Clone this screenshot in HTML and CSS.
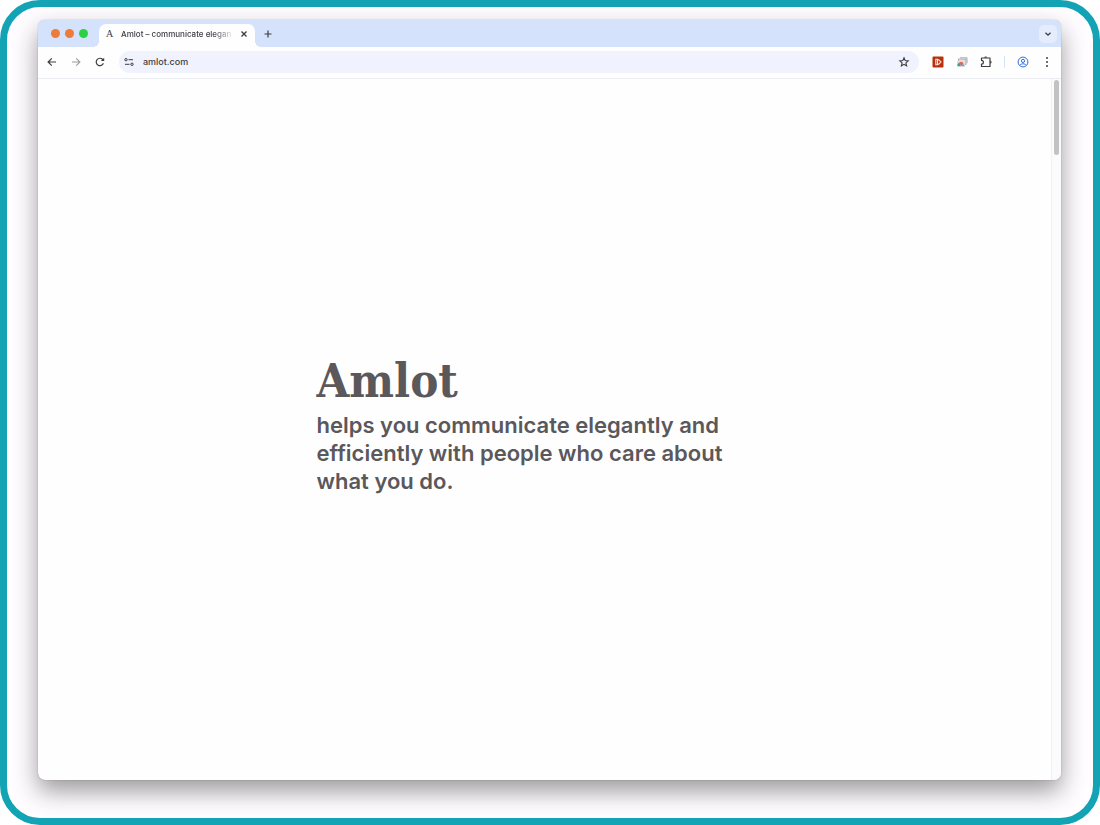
FILE: index.html
```html
<!DOCTYPE html>
<html lang="en">
<head>
<meta charset="UTF-8" />
<meta name="viewport" content="width=device-width, initial-scale=1" />
<title>Amlot – communicate elegantly</title>
<link rel="stylesheet" href="styles.css">
</head>
<body>

<div class="frame">
  <div class="browser">

    <div class="tab-strip">
      <div class="lights">
        <span class="light"></span>
        <span class="light"></span>
        <span class="light light-green"></span>
      </div>
      <div class="tab">
        <span class="favicon">A</span>
        <span class="tab-title">Amlot – communicate elegan</span>
        <button type="button" class="tab-close" aria-label="Close tab">
          <svg width="8" height="8" viewBox="0 0 8 8"><path d="M1.500 1.500l5 5M6.500 1.500l-5 5" stroke-width="1.300"/></svg>
        </button>
      </div>
      <button type="button" class="new-tab" aria-label="New tab">
        <svg width="10" height="10" viewBox="0 0 10 10"><path d="M5 1.500v7M1.500 5h7" stroke-width="1.200"/></svg>
      </button>
      <button type="button" class="tab-search" aria-label="Search tabs">
        <svg width="8" height="8" viewBox="0 0 8 8"><path d="M1.500 2.800L4 5.200l2.500-2.400" stroke-width="1.300"/></svg>
      </button>
    </div>

    <div class="toolbar">
      <button type="button" class="tool" aria-label="Back">
        <svg width="12" height="12" viewBox="0 0 12 12"><path d="M10 6H2.300M5.800 2.300L2.100 6l3.700 3.700" stroke-width="1.200"/></svg>
      </button>
      <button type="button" class="tool tool-off" aria-label="Forward" disabled>
        <svg width="12" height="12" viewBox="0 0 12 12"><path d="M2 6h7.700M6.200 2.300L9.900 6 6.200 9.700" stroke-width="1.100"/></svg>
      </button>
      <button type="button" class="tool" aria-label="Reload">
        <svg width="12" height="12" viewBox="0 0 12 12"><path d="M9.400 7.200A3.700 3.700 0 1 1 8.700 3.500L9.800 4.600" stroke-width="1.200"/><path d="M10.200 1.800v3.300H6.900z" fill="#3c3c43" stroke="none"/></svg>
      </button>

      <div class="omnibox">
        <button type="button" class="site-info" aria-label="Site information">
          <svg width="12" height="12" viewBox="0 0 12 12"><circle cx="3" cy="3.700" r="1.200"/><path d="M5.500 3.700H10M2 8.300h4.500"/><circle cx="9" cy="8.300" r="1.200"/></svg>
        </button>
        <input type="text" class="url" value="amlot.com" aria-label="Address" />
        <button type="button" class="bookmark" aria-label="Bookmark this page">
          <svg width="12" height="12" viewBox="0 0 12 12"><path d="M6 1.800l1.200 2.800 3 .300-2.300 2 .700 3L6 8.300l-2.600 1.600.700-3-2.300-2 3-.300z" stroke-width="1.100"/></svg>
        </button>
      </div>

      <button type="button" class="tool" aria-label="Page tools extension">
        <svg width="12" height="12" viewBox="0 0 12 12"><rect x="0.500" y="0.500" width="11" height="11" rx="1" fill="#b9300e" stroke="none"/><path d="M3.800 3.300v5.400h1.700V3.300zM5.500 3.800h1.300L9 6 6.800 8.200H5.500" stroke="#fbe6df" stroke-width="1.100"/></svg>
      </button>
      <button type="button" class="tool" aria-label="Image extension">
        <svg width="12" height="12" viewBox="0 0 12 12"><path d="M4 1.800h7v5.500" stroke="#aaa9ae"/><rect x="2.500" y="3" width="7.500" height="5.500" fill="#dedde2" stroke="#9b9a9f" stroke-width="0.700"/><rect x="1" y="4.700" width="8" height="5.800" rx="0.500" fill="#e0e0e4" stroke="none"/><path d="M1.500 10.200V8l2-1.500 1.500 3.700z" fill="#3fa37b" stroke="none"/><path d="M2.800 7.500a2.500 2.500 0 0 1 4.700 0l-2 2.200z" fill="#e46850" stroke="none"/><path d="M6.800 7.500l2 2.700H5z" fill="#6c9bdf" stroke="none"/></svg>
      </button>
      <button type="button" class="tool" aria-label="Extensions">
        <svg width="12" height="12" viewBox="0 0 12 12"><path d="M1.500 2h8.500v8.500H1.500V8.200a1.900 1.900 0 0 0 0-3.800z" stroke-width="1.200" stroke-linejoin="round"/><path d="M4.300 1.800a1.400 1.400 0 0 1 2.800 0zM10.200 4.800a1.400 1.400 0 0 1 0 2.800z" fill="#3c3c43" stroke="none"/></svg>
      </button>
      <span class="divider"></span>
      <button type="button" class="tool profile" aria-label="Profile">
        <svg width="12" height="12" viewBox="0 0 12 12"><circle cx="6" cy="6" r="4.900"/><circle cx="6" cy="4.900" r="1.600"/><path d="M2.800 9.300c1.500-2 4.900-2 6.400 0"/></svg>
      </button>
      <button type="button" class="tool" aria-label="Menu">
        <svg width="12" height="12" viewBox="0 0 12 12"><g fill="#3c3c43" stroke="none"><circle cx="6" cy="2" r="1"/><circle cx="6" cy="6" r="1"/><circle cx="6" cy="10" r="1"/></g></svg>
      </button>
    </div>

    <div class="viewport">
      <main class="page">
        <div class="intro">
          <h1>Amlot</h1>
          <p>helps you communicate elegantly and efficiently with people who care about what you do.</p>
        </div>
      </main>
      <div class="scrollbar"><div class="thumb"></div></div>
    </div>

  </div>
</div>

</body>
</html>
```
FILE: styles.css
```css
* {
  box-sizing: border-box;
}
body {
  margin: 0;
  background: #fff;
  font-family: Inter, "Liberation Sans", sans-serif;
  color: #3c3c43;
}
.frame {
  display: flex;
  height: 100vh;
  padding: 13px 32px 38px 31px;
  border: 7px solid #12a3b4;
  border-radius: 40px;
  background: #fffdff;
  overflow: hidden;
}
.browser {
  flex: 1;
  display: flex;
  flex-direction: column;
  min-width: 0;
  border-radius: 7px;
  background: #fefefe;
  box-shadow: 0 0 1px rgba(0, 0, 0, 0.5), 0 11px 24px rgba(30, 26, 30, 0.44);
  overflow: hidden;
}
button {
  display: flex;
  align-items: center;
  justify-content: center;
  padding: 0;
  border: none;
  background: none;
}
svg {
  display: block;
  fill: none;
  stroke: #3c3c43;
  stroke-width: 1;
}

/* tabs */
.tab-strip {
  display: flex;
  align-items: flex-end;
  height: 27px;
  padding-right: 4px;
  background: #d5e2fc;
}
.lights {
  display: flex;
  align-self: center;
  gap: 5px;
  padding: 0 11px 0 13px;
}
.light {
  width: 9px;
  height: 9px;
  border-radius: 50%;
  background: #ed7b3c;
}
.light-green {
  background: #2bd143;
}
.tab {
  position: relative;
  display: flex;
  align-items: center;
  width: 156px;
  height: 23px;
  padding: 0 6px 4px 7px;
  border-radius: 7px 7px 0 0;
  background: #fefefe;
}
/* flared feet of the active tab */
.tab::before,
.tab::after {
  content: "";
  position: absolute;
  bottom: 0;
  width: 6px;
  height: 6px;
}
.tab::before {
  right: 100%;
  background: radial-gradient(circle at 0 0, transparent 6px, #fefefe 6px);
}
.tab::after {
  left: 100%;
  background: radial-gradient(circle at 100% 0, transparent 6px, #fefefe 6px);
}
.favicon {
  width: 15px;
  font: 10px "Liberation Serif", serif;
}
.tab-title {
  flex: 1;
  white-space: nowrap;
  font-size: 8px;
  font-weight: 500;
  -webkit-mask-image: linear-gradient(to right, #000 80%, transparent);
  mask-image: linear-gradient(to right, #000 80%, transparent);
}
.tab-close {
  width: 10px;
  height: 12px;
  margin-left: 4px;
}
.new-tab {
  width: 26px;
  height: 26px;
}
.tab-search {
  align-self: center;
  width: 18px;
  height: 18px;
  margin-left: auto;
  border-radius: 5px;
  background: #e5ecfc;
}

/* toolbar */
.toolbar {
  display: flex;
  align-items: center;
  height: 32px;
  padding: 0 2px 2px;
  border-bottom: 1px solid #ebebf2;
}
.tool {
  width: 24px;
  height: 24px;
}
.tool-off {
  opacity: 0.5;
}
.omnibox {
  flex: 1;
  display: flex;
  align-items: center;
  height: 22px;
  margin: 0 7px;
  padding: 0 9px 0 4px;
  border-radius: 11px;
  background: #f0f2fd;
}
.site-info {
  width: 12px;
  height: 12px;
}
.url {
  flex: 1;
  min-width: 0;
  padding: 0 8px;
  border: none;
  outline: none;
  background: none;
  color: #3c3c43;
  font: 500 9px Inter, "Liberation Sans", sans-serif;
}
.divider {
  width: 1px;
  height: 12px;
  margin: 0 6px;
  background: #d8e1fa;
}
.profile svg {
  stroke: #2f6fdc;
}

/* page */
.viewport {
  flex: 1;
  display: flex;
}
.page {
  flex: 1;
  display: flex;
  align-items: center;
  justify-content: center;
}
.intro {
  width: 456px;
  color: #5b585c;
}
h1 {
  margin: 0 0 14px;
  font: bold 47px/32px "DejaVu Serif Condensed", "DejaVu Serif", serif;
}
p {
  max-width: 420px;
  margin: 0;
  font-size: 22px;
  font-weight: 600;
  line-height: 28px;
}
.scrollbar {
  width: 10px;
  padding: 1px 2px;
  border-left: 1px solid #f1f0f3;
  background: #fbfafc;
}
.thumb {
  height: 75px;
  border-radius: 3px;
  background: #c2c1c4;
}
```
